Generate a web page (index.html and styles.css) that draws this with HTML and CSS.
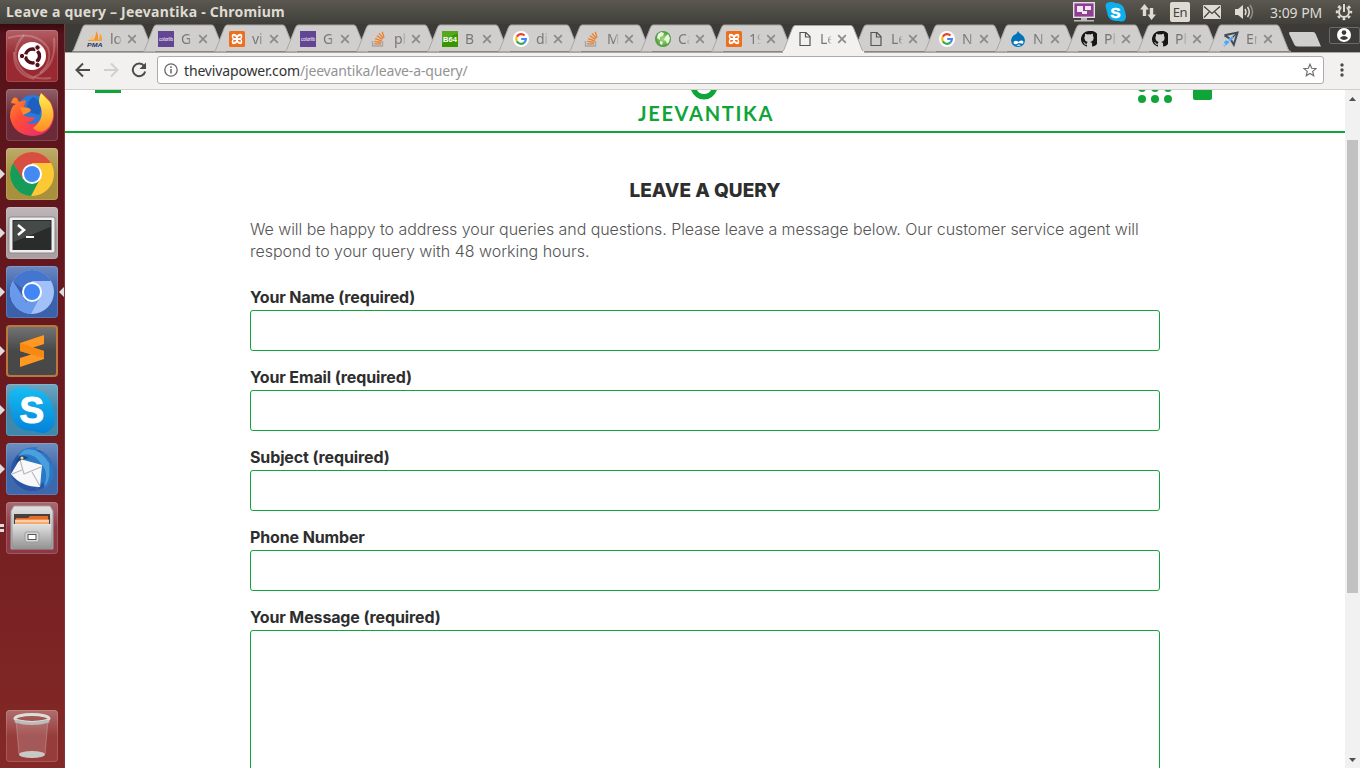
FILE: index.html
```
<!DOCTYPE html>
<html lang="en">
<head>
<meta charset="utf-8">
<title>Leave a query – Jeevantika</title>
<link rel="stylesheet" href="styles.css">
</head>
<body>
<svg class="defs" width="0" height="0">
  <defs>
    <linearGradient id="steel" x1="0" y1="0" x2="0" y2="1"><stop offset="0" stop-color="#e2e2e2"/><stop offset="1" stop-color="#929292"/></linearGradient>
    <linearGradient id="fire" x1="0" y1="0" x2="1" y2="1"><stop offset="0" stop-color="#ff9a25"/><stop offset=".4" stop-color="#ff4b38"/><stop offset="1" stop-color="#e5257b"/></linearGradient>
    <linearGradient id="flame" x1="0" y1="0" x2="0" y2="1"><stop offset="0" stop-color="#fff24e"/><stop offset="1" stop-color="#ff8c22"/></linearGradient>
    <linearGradient id="sky" x1="0" y1="0" x2="0" y2="1"><stop offset="0" stop-color="#18bdf3"/><stop offset="1" stop-color="#0482d8"/></linearGradient>
    <radialGradient id="leaf"><stop offset="0" stop-color="#a8dc7c"/><stop offset="1" stop-color="#47983b"/></radialGradient>
  </defs>
  <symbol id="shape" viewBox="0 0 84 28"><path d="M0 27.5C1 27.5 1.5 26 2 25L10.5 3.500Q11.500 1 13 1H69Q70.500 1 71.500 3.500L80 25Q81 27.500 83 27.500Z" fill="currentColor"/><path d="M.5 27.500L2 25L10.500 3.500Q11.500 1 13 1H69Q70.500 1 71.500 3.500L80 25Q81 27.500 83 27.500" fill="none" stroke="#aaa8a5" stroke-width="1"/></symbol>
  <symbol id="close" viewBox="0 0 10 10"><path d="M1.200 1.200L8.800 8.800M8.800 1.200L1.200 8.800" stroke="#8b8a88" stroke-width="1.700"/></symbol>
  <symbol id="xampp" viewBox="0 0 16 16"><rect width="16" height="16" rx="1.500" fill="#ec6f20"/><path d="M8 4.500Q6.800 2.800 4.800 2.800Q2.700 2.800 2.700 5Q2.700 6.800 3.800 8Q2.700 9.200 2.700 11Q2.700 13.200 4.800 13.200Q6.800 13.200 8 11.500Q9.200 13.200 11.200 13.200Q13.300 13.200 13.300 11Q13.300 9.200 12.200 8Q13.300 6.800 13.300 5Q13.300 2.800 11.200 2.800Q9.200 2.800 8 4.500Z" fill="#fff"/><path d="M5 4.700V6.300H7M11 4.700V6.300H9M5 11.300V9.700H7M11 11.300V9.700H9" fill="none" stroke="#ec6f20" stroke-width="1.200"/></symbol>
  <symbol id="so" viewBox="0 0 16 16"><path d="M1.500 10V15H11.500V10" fill="none" stroke="#a6a6a6" stroke-width="1.400"/><path d="M3.200 12.800H10M3.400 10.400L10.200 11.400M4.100 7.600L10.700 9.800M5.700 4.800L11.400 8.400M8 2.300L12.300 7.400M11.200.8L13.100 6.600" stroke="#ed7d26" stroke-width="1.300"/></symbol>
  <symbol id="google" viewBox="0 0 16 16"><circle cx="8" cy="8" r="8" fill="#fff"/><g fill="none" stroke-width="2.200"><path d="M11.500 4.500A4.900 4.900 0 0 0 3.800 5.700" stroke="#ea4335"/><path d="M3.800 5.700A4.900 4.900 0 0 0 3.800 10.300" stroke="#fbbc05"/><path d="M3.800 10.300A4.900 4.900 0 0 0 11.300 11.600" stroke="#34a853"/><path d="M11.300 11.600A4.900 4.900 0 0 0 12.900 8H8.200" stroke="#4285f4"/></g></symbol>
  <symbol id="globe" viewBox="0 0 16 16"><circle cx="8" cy="8" r="8" fill="url(#leaf)"/><path d="M3 3L6 1L9 2L8 5L5 6L5 9L2 7ZM10 6L13 3L15 7L14 11L12 13L11 10L9 9ZM5 10L8 11L7 14L5 13Z" fill="#e9f7dc"/></symbol>
  <symbol id="page" viewBox="0 0 16 16"><path d="M3 1.500H9L13 5.500V14.500H3ZM8.500 1.500V6H13" fill="none" stroke="#555" stroke-width="1.200"/></symbol>
  <symbol id="drupal" viewBox="0 0 16 16"><path d="M8 0Q9 2.500 12 4Q15 6 15 9.300Q14.500 16 8 16Q1.500 16 1 9.300Q1 6 4 4Q7 3 8 0Z" fill="#0073ba"/><path d="M4 10.500Q6 8.700 8.500 11Q11 8.700 13 10Q14 12 12.500 12.700Q10 12 8.500 12Q6 14 4 12.700Q3 11.600 4 10.500ZM6.500 14.200Q9 12.800 11 14.300Q9 15.300 6.500 14.200Z" fill="#fff"/></symbol>
  <symbol id="github" viewBox="0 0 16 16"><path fill="#171515" d="M8 0a8 8 0 0 0-2.530 15.590c.4.070.55-.17.550-.38v-1.490c-2.230.48-2.700-.95-2.700-.95-.36-.92-.89-1.170-.89-1.170-.73-.5.060-.49.060-.49.800.06 1.230.83 1.230.83.710 1.220 1.870.87 2.330.66.070-.52.280-.87.510-1.070l4-.0c.29.250.54.730.54 1.480v2.200c0 .21.150.46.550.38A8 8 0 0 0 8 0Z"/><path d="M4.200 2.800Q5.500 3 6.400 3.500Q8 3.100 9.600 3.500Q10.500 3 11.800 2.800Q12.200 3.800 11.900 4.800Q13 6 12.500 8Q12 10.600 9.200 11Q10 11.600 10 13V16H6V13Q6 11.600 6.800 11Q4 10.600 3.500 8Q3 6 4.100 4.800Q3.800 3.800 4.200 2.800Z" fill="#d0cfcd"/></symbol>
  <symbol id="plane" viewBox="0 0 16 16"><path d="M1.500 4.300L14.500 1.500L10.800 13.700L8.200 9.200M6.500 7.300L1.500 4.300" fill="none" stroke="#414b55" stroke-width="2"/><path d="M14 2L7 9" stroke="#414b55" stroke-width="1.200"/><path d="M10 6L1 15M4 9.800L1.500 12" stroke="#46aaff" stroke-width="2" stroke-dasharray="5 1"/></symbol>
</svg>

<header class="menubar">
  <span class="window-title">Leave a query – Jeevantika - Chromium</span>
  <div class="tray">
    <svg class="t-display" viewBox="0 0 22 20"><rect x=".7" y=".7" width="20.600" height="14.600" fill="#8f3f91" stroke="#e5dfe5" stroke-width="1.400"/><path d="M4 4H10V10H4ZM12 4H18V8H12ZM9 9H14V12H9Z" fill="#f3e7f3"/><path d="M8 16H14V18H21V19.500H1V18H8Z" fill="#bcbab6"/></svg>
    <svg class="t-skype" viewBox="0 0 22 22"><path d="M1 7Q-1 1 6 1Q9 1 10 2Q19 2 20 11Q21 13 21 16Q20 22 14 20Q3 21 2 11Z" fill="#0eaff0"/><text x="5.500" y="16.500" font-family="Liberation Sans" font-size="15" font-weight="700" fill="#fff" stroke="#fff" stroke-width=".6">S</text></svg>
    <svg class="t-arrows" viewBox="0 0 18 18"><path d="M5.500 1L10 6.500H7.200V13H3.800V6.500H1ZM12.500 17L8.500 11.500H10.800V5H14.200V11.500H17Z" fill="#dfdbd2"/></svg>
    <span class="lang">En</span>
    <svg class="t-mail" viewBox="0 0 18 14"><rect width="18" height="14" rx="1" fill="#dfdbd2"/><path d="M1 1.500L9 8.500L17 1.500M1 12.500L6.200 7M17 12.500L11.800 7" fill="none" stroke="#45443e" stroke-width="1.300"/></svg>
    <svg class="t-sound" viewBox="0 0 22 18"><path d="M1 6H4L9 2V16L4 12H1Z" fill="#dfdbd2"/><g fill="none" stroke="#dfdbd2" stroke-width="1.500"><path d="M11 6Q13 9 11 12M13.500 4Q17 9 13.500 14"/><path d="M16 2Q21 9 16 16" opacity=".45"/></g></svg>
    <span class="clock">3:09 PM</span>
    <svg class="t-gear" viewBox="0 0 18 18"><circle cx="9" cy="9" r="7" fill="none" stroke="#dfdbd2" stroke-width="2.400" stroke-dasharray="2.750 2.750" stroke-dashoffset="1.400"/><circle cx="9" cy="9" r="5" fill="none" stroke="#dfdbd2" stroke-width="2"/><path d="M9 0V8.500" stroke="#4b4a44" stroke-width="5"/><path d="M9 1V9" stroke="#dfdbd2" stroke-width="2"/></svg>
  </div>
</header>

<div class="desktop">
  <nav class="launcher">
    <div class="tile dash"><svg viewBox="0 0 52 52"><g fill="none" stroke="#fff" stroke-opacity=".22" stroke-width="2"><path d="M2 8Q30 0 42 18Q47 32 34 43"/><path d="M48 8Q51 38 28 47"/><path d="M18 5Q4 21 13 36Q22 51 45 48"/><path d="M8 22Q7 44 28 49"/></g><circle cx="26" cy="26" r="14" fill="#fff"/><circle cx="26.500" cy="26" r="7" fill="none" stroke="#531019" stroke-width="3.400" stroke-dasharray="12.700 2" stroke-dashoffset="6"/><g fill="#531019" stroke="#fff"><circle cx="16" cy="26" r="2.700"/><circle cx="31.500" cy="17.500" r="2.700"/><circle cx="31.500" cy="35" r="2.700"/></g></svg></div>
    <div class="tile firefox"><svg viewBox="0 0 52 52"><circle cx="27" cy="23" r="17" fill="#2879d9"/><path d="M27 8Q18 15 23 23L33 26Q40 14 27 8Z" fill="#174fae" opacity=".6"/><path d="M5 14Q7 7 11 9L13 13Q20 10 20 12L18 18L25 20Q23 25 16 25Q21 29 29 28Q27 34 20 33Q29 39 38 27Q41 17 34 11L37 5Q49 15 48 28Q45 46 27 47Q7 46 4 28Q4 17 10 15Z" fill="url(#fire)"/><path d="M35 4Q31 12 35 19Q38 31 27 39Q35 47 43 38Q51 27 44 13L39 8Z" fill="url(#flame)"/><path d="M14 18L23 19L25 22L17 26Z" fill="#ff8d29"/></svg></div>
    <div class="tile chrome running"><svg viewBox="0 0 52 52"><circle cx="26" cy="26" r="22" fill="#fcc934"/><path d="M7 15A22 22 0 0 1 45 15H26L16 31Z" fill="#d94e42"/><path d="M7 15A22 22 0 0 0 25 48L34 31H17Z" fill="#169b59"/><circle cx="26" cy="26" r="10" fill="#fff"/><circle cx="26" cy="26" r="8" fill="#448af3"/></svg></div>
    <div class="tile terminal running"><svg viewBox="0 0 52 52"><rect x="3" y="10" width="46" height="36" rx="2" fill="#eee" stroke="#888"/><rect x="6.500" y="13" width="39" height="30" fill="#292c2b"/><path d="M7.500 14H44.500V20L7.500 35Z" fill="#454948"/><path d="M12 18L18 23L12 28" fill="none" stroke="#fff" stroke-width="2.500"/><path d="M20 30H28" stroke="#fff" stroke-width="2"/></svg></div>
    <div class="tile chromium running focused"><svg viewBox="0 0 52 52"><circle cx="26" cy="26" r="22" fill="#a2c1f8"/><path d="M7 15A22 22 0 0 1 45 15H26L16 31Z" fill="#4476cf"/><path d="M7 15A22 22 0 0 0 25 48L34 31H17Z" fill="#6999eb"/><path d="M7 15L21 37L17 23Z" fill="#3a5fae"/><circle cx="26" cy="26" r="10" fill="#fff"/><circle cx="26" cy="26" r="8" fill="#4285f4"/></svg></div>
    <div class="tile sublime running"><svg viewBox="0 0 52 52"><path d="M14 18L38 10V19L27 22.500L38 26V34L14 42V33L25 29.500L14 26Z" fill="#ff9822"/><path d="M14 18L38 26V33L14 26Z" fill="#f58912"/></svg></div>
    <div class="tile skype running"><svg viewBox="0 0 52 52"><path d="M3 17Q2 3 15 3Q21 3 25 5Q43 6 47 24Q53 44 39 49Q32 49 28 47Q7 48 5 27Z" fill="url(#sky)"/><text x="13.500" y="39" font-family="Liberation Sans" font-weight="700" font-size="37" fill="#fff" stroke="#fff" stroke-width="1">S</text></svg></div>
    <div class="tile thunderbird running"><svg viewBox="0 0 52 52"><circle cx="26" cy="27" r="21" fill="#2c54a6"/><path d="M12 15Q13 4 31 4Q28 8 38 10Q51 22 46 37L40 46L37 39L30 47L35 30Z" fill="#2b79c6"/><path d="M12 13Q27 7 36 22Q43 29 38 44Q45 38 43 20Q32 3 18 7Z" fill="#4a9fdc"/><path d="M5 31L14 16L36 22L34 44Q15 44 5 31Z" fill="#f8f8f8"/><path d="M14 17L18 31L35 24M6 31L16 27M34 43L26 29" fill="none" stroke="#b4b7be" stroke-width="1.100"/><path d="M10 20Q12 8 23 15L15 17Z" fill="#174a83"/><circle cx="16" cy="15" r="1.500" fill="#ffd36a"/></svg></div>
    <div class="tile files running twin"><svg viewBox="0 0 52 52"><path d="M8 4H44L47 9V47H5V9Z" fill="url(#steel)" stroke="#a3a3a3"/><rect x="8" y="12" width="36" height="20" fill="#49403d"/><path d="M10 16H22L24 14H42V30H10Z" fill="#e66b2e"/><path d="M9 17.500H43V23H9Z" fill="#f5ab6d"/><path d="M9 19H43" stroke="#fff3df"/><path d="M7 22H45V47H7Z" fill="url(#steel)"/><rect x="19" y="30" width="14" height="10" rx="2" fill="#d8d8d8" stroke="#999"/><rect x="22" y="32.500" width="8" height="5" fill="#fff" stroke="#555"/></svg></div>
    <div class="tile trash"><svg viewBox="0 0 52 52"><path d="M10 10L13 44Q26 49 39 44L42 10Z" fill="#fff" fill-opacity=".14" stroke="#d9b4b2" stroke-opacity=".4"/><ellipse cx="26" cy="44.500" rx="13" ry="3.500" fill="#c8c8c5"/><ellipse cx="26" cy="8.500" rx="17" ry="4" fill="#a35454" stroke="#deded9" stroke-width="3"/><path d="M9 11Q26 16 43 11" fill="none" stroke="#bbb" stroke-width="3"/></svg></div>
  </nav>

  <main class="browser">
    <div class="tabstrip">
      <div class="tab"><svg class="shape"><use href="#shape"/></svg><svg class="fav" viewBox="0 0 16 16"><path d="M3 9L6 2V9Z" fill="#ffc158"/><path d="M6.500 9Q9 6 9 0Q12 4 11 9Z" fill="#f79328"/><path d="M12 9Q13.500 5 12.500 2.500Q15.500 5 15 9ZM1 9L15 8.400V10L1 10Z" fill="#f4a13c"/><text x="0" y="15.500" font-family="Liberation Sans" font-weight="bold" font-style="italic" font-size="6" textLength="15.500" lengthAdjust="spacingAndGlyphs" fill="#263566">PMA</text></svg><span>lo</span><svg class="x"><use href="#close"/></svg></div>
      <div class="tab"><svg class="shape"><use href="#shape"/></svg><svg class="fav" viewBox="0 0 16 16"><rect width="16" height="16" fill="#624693"/><text x="1" y="9.700" font-family="Liberation Sans" font-size="5" textLength="14" lengthAdjust="spacingAndGlyphs" fill="#fff">colorlib</text></svg><span>G</span><svg class="x"><use href="#close"/></svg></div>
      <div class="tab"><svg class="shape"><use href="#shape"/></svg><svg class="fav"><use href="#xampp"/></svg><span>vi</span><svg class="x"><use href="#close"/></svg></div>
      <div class="tab"><svg class="shape"><use href="#shape"/></svg><svg class="fav" viewBox="0 0 16 16"><rect width="16" height="16" fill="#624693"/><text x="1" y="9.700" font-family="Liberation Sans" font-size="5" textLength="14" lengthAdjust="spacingAndGlyphs" fill="#fff">colorlib</text></svg><span>G</span><svg class="x"><use href="#close"/></svg></div>
      <div class="tab"><svg class="shape"><use href="#shape"/></svg><svg class="fav"><use href="#so"/></svg><span>ph</span><svg class="x"><use href="#close"/></svg></div>
      <div class="tab"><svg class="shape"><use href="#shape"/></svg><svg class="fav" viewBox="0 0 16 16"><rect width="16" height="16" fill="#389600"/><path d="M0 0H16V2Q8 5 0 13Z" fill="#54a91e"/><text x="1" y="10.500" font-family="Liberation Sans" font-size="7" font-weight="bold" textLength="14" lengthAdjust="spacingAndGlyphs" fill="#fff">B64</text></svg><span>B</span><svg class="x"><use href="#close"/></svg></div>
      <div class="tab"><svg class="shape"><use href="#shape"/></svg><svg class="fav"><use href="#google"/></svg><span>di</span><svg class="x"><use href="#close"/></svg></div>
      <div class="tab"><svg class="shape"><use href="#shape"/></svg><svg class="fav"><use href="#so"/></svg><span>M</span><svg class="x"><use href="#close"/></svg></div>
      <div class="tab"><svg class="shape"><use href="#shape"/></svg><svg class="fav"><use href="#globe"/></svg><span>Ca</span><svg class="x"><use href="#close"/></svg></div>
      <div class="tab"><svg class="shape"><use href="#shape"/></svg><svg class="fav"><use href="#xampp"/></svg><span>19</span><svg class="x"><use href="#close"/></svg></div>
      <div class="tab active"><svg class="shape"><use href="#shape"/></svg><svg class="fav"><use href="#page"/></svg><span>Le</span><svg class="x"><use href="#close"/></svg></div>
      <div class="tab"><svg class="shape"><use href="#shape"/></svg><svg class="fav"><use href="#page"/></svg><span>Le</span><svg class="x"><use href="#close"/></svg></div>
      <div class="tab"><svg class="shape"><use href="#shape"/></svg><svg class="fav"><use href="#google"/></svg><span>N</span><svg class="x"><use href="#close"/></svg></div>
      <div class="tab"><svg class="shape"><use href="#shape"/></svg><svg class="fav"><use href="#drupal"/></svg><span>N</span><svg class="x"><use href="#close"/></svg></div>
      <div class="tab"><svg class="shape"><use href="#shape"/></svg><svg class="fav"><use href="#github"/></svg><span>Ph</span><svg class="x"><use href="#close"/></svg></div>
      <div class="tab"><svg class="shape"><use href="#shape"/></svg><svg class="fav"><use href="#github"/></svg><span>Ph</span><svg class="x"><use href="#close"/></svg></div>
      <div class="tab"><svg class="shape"><use href="#shape"/></svg><svg class="fav"><use href="#plane"/></svg><span>En</span><svg class="x"><use href="#close"/></svg></div>
      <svg class="newtab" viewBox="0 0 34 16"><path d="M1.500 0H25Q27 0 27.700 2L33 14.500H9.500Q7 14.500 6 12L1 1.500Z" fill="#d0cfcd"/></svg>
      <div class="account"><svg viewBox="0 0 14 14"><circle cx="7" cy="7" r="7" fill="#fff"/><circle cx="7" cy="4.600" r="2.300" fill="#3c3b37"/><path d="M2.800 10Q7 6 11.200 10Q7 14 2.800 10Z" fill="#3c3b37"/></svg></div>
    </div>

    <div class="toolbar">
      <svg class="nav" viewBox="0 0 16 16"><path d="M15 8H2M8 1.500L1.500 8L8 14.500" fill="none" stroke="#4b4b4b" stroke-width="2"/></svg>
      <svg class="nav" viewBox="0 0 16 16"><path d="M1 8H14M8 1.500L14.500 8L8 14.500" fill="none" stroke="#d0d0cf" stroke-width="2"/></svg>
      <svg class="nav" viewBox="0 0 16 16"><path d="M13.200 4.200A6.300 6.300 0 1 0 14.200 9.500" fill="none" stroke="#4b4b4b" stroke-width="2"/><path d="M15 .5V7H8.500Z" fill="#4b4b4b"/></svg>
      <div class="omnibox">
        <svg class="info" viewBox="0 0 14 14"><circle cx="7" cy="7" r="6.200" fill="none" stroke="#666" stroke-width="1.300"/><path d="M7 6V10.500M7 3.300V4.900" stroke="#666" stroke-width="1.500"/></svg>
        <span class="url">thevivapower.com<i>/jeevantika/leave-a-query/</i></span>
        <svg class="star" viewBox="0 0 14 14"><path d="M7 1.300L8.700 5.300L13 5.600L9.700 8.400L10.700 12.700L7 10.400L3.300 12.700L4.300 8.400L1 5.600L5.300 5.300Z" fill="none" stroke="#6e6e6e" stroke-width="1.200"/></svg>
      </div>
      <svg class="dots" viewBox="0 0 4 14"><g fill="#4b4b4b"><circle cx="2" cy="2" r="1.700"/><circle cx="2" cy="7" r="1.700"/><circle cx="2" cy="12" r="1.700"/></g></svg>
    </div>

    <div class="viewport">
      <div class="page">
        <div class="site-header">
          <span class="burger"></span>
          <div class="brand"><svg viewBox="0 0 28 10"><path d="M0 0Q4 9.500 13 9.500Q22 9.500 26 0H20Q18 4 13 4Q8 4 6 0Z" fill="#0fa539"/></svg><span>JEEVANTIKA</span></div>
          <svg class="apps" viewBox="0 0 34 14"><g fill="#0fa539"><circle cx="4" cy="-2" r="4"/><circle cx="17" cy="-2" r="4"/><circle cx="30" cy="-2" r="4"/><circle cx="4" cy="9" r="4"/><circle cx="17" cy="9" r="4"/><circle cx="30" cy="9" r="4"/></g></svg>
          <span class="bag"></span>
        </div>
        <form class="query">
          <h1>LEAVE A QUERY</h1>
          <p><span class="line1">We will be happy to address your queries and questions. Please leave a message below. Our customer service agent will</span><br><span class="line2">respond to your query with 48 working hours.</span></p>
          <label><span>Your Name (required)</span><input type="text"></label>
          <label><span>Your Email (required)</span><input type="text"></label>
          <label><span>Subject (required)</span><input type="text"></label>
          <label><span>Phone Number</span><input type="text"></label>
          <label><span>Your Message (required)</span><textarea></textarea></label>
        </form>
      </div>
      <div class="scrollbar">
        <svg viewBox="0 0 7 4"><path d="M0 4L3.500 0L7 4Z" fill="#505050"/></svg>
        <div class="thumb"></div>
        <svg viewBox="0 0 7 4"><path d="M0 0L3.500 4L7 0Z" fill="#505050"/></svg>
      </div>
    </div>
  </main>
</div>
</body>
</html>
```
FILE: styles.css
```
* { box-sizing: border-box; }
html, body { height: 100%; }
body { margin: 0; overflow: hidden; background: #fff; font-family: "Noto Sans", sans-serif; display: flex; flex-direction: column; }
svg { display: block; flex: none; }
.defs { position: absolute; }

.menubar { flex: none; height: 24px; display: flex; justify-content: space-between; align-items: center; padding: 0 7px 0 6px; background: linear-gradient(#5a5850, #403f3a); color: #dfdbd2; }
.window-title { font-size: 14px; font-weight: 700; line-height: 24px; white-space: nowrap; letter-spacing: .23px; }
.tray { display: flex; align-items: center; height: 24px; }
.t-display { width: 22px; height: 20px; }
.t-skype { width: 22px; height: 22px; margin-left: 10px; }
.t-arrows { width: 18px; height: 18px; margin-left: 12px; }
.lang { width: 20px; height: 20px; margin-left: 13px; border-radius: 2px; background: #dfdbd2; color: #45443e; font-size: 13px; line-height: 20px; text-align: center; letter-spacing: -.5px; }
.t-mail { width: 18px; height: 14px; margin-left: 13px; }
.t-sound { width: 22px; height: 18px; margin-left: 13px; }
.clock { width: 52px; margin-left: 14px; font-size: 14px; letter-spacing: -.05px; white-space: nowrap; }
.t-gear { width: 18px; height: 18px; margin-left: 13px; }

.desktop { flex: 1; min-height: 0; display: flex; }
.launcher { flex: none; width: 65px; padding: 6px 6px 6px; display: flex; flex-direction: column; gap: 7px; background: linear-gradient(#380b0f 0, #54121a 10px, #5c151b 100px, #6c1a1f 50%, #842927 100%); border-right: 1px solid #813537; }
.tile { position: relative; flex: none; width: 52px; height: 52px; border-radius: 4px; background: #9b4a4c; }
.tile svg { width: 52px; height: 52px; border-radius: 4px; background: linear-gradient(rgba(255,255,255,.25), rgba(255,255,255,0) 50%); box-shadow: inset 0 0 0 1px rgba(255,255,255,.15); }
.dash { background: #992a31; }
.firefox { background: #6b2a37; }
.chrome { background: #a9903c; }
.terminal { background: #a99fa1; }
.chromium { background: #3b61ab; }
.sublime { background: #484848; }
.sublime svg { box-shadow: inset 0 0 0 2px #b9793d; }
.skype { background: #4088ab; }
.thunderbird { background: #3d69ac; }
.files { background: #8d3945; }
.trash { margin-top: auto; background: #963d3c; }
.running::before { content: ""; position: absolute; left: -6px; top: 21px; border: 5px solid transparent; border-left-color: #ddd; border-right: 0; }
.focused::after { content: ""; position: absolute; right: -6px; top: 21px; border: 5px solid transparent; border-right-color: #ddd; border-left: 0; }
.twin::before { top: 22px; width: 4px; height: 2px; border: solid #ddd; border-width: 3px 0; }

.browser { flex: 1; min-width: 0; display: flex; flex-direction: column; }
.tabstrip { flex: none; height: 29px; padding-left: 7px; display: flex; background: #3c3b37; border-bottom: 1px solid #aaa8a5; }
.tab { position: relative; z-index: 1; flex: none; width: 71px; height: 29px; display: flex; align-items: center; padding-left: 15px; color: #d0cfcd; }
.shape { position: absolute; left: 0; top: 0; width: 84px; height: 28px; }
.fav { position: relative; width: 16px; height: 16px; margin-top: 1px; }
.tab span { position: relative; width: 12px; margin-left: 7px; overflow: hidden; white-space: nowrap; font-size: 14px; line-height: 20px; color: #777; -webkit-mask-image: linear-gradient(90deg, #000 60%, transparent); mask-image: linear-gradient(90deg, #000 60%, transparent); }
.x { position: relative; width: 10px; height: 10px; margin: 1px 0 0 5px; }
.active { z-index: 2; color: #f2f1ef; }
.active .shape { height: 29px; }
.active::after { content: ""; position: absolute; left: 1px; top: 27px; width: 81px; height: 2px; background: #f2f1ef; }
.newtab { position: relative; z-index: 2; width: 34px; height: 16px; margin: 8px 0 0 9px; }
.account { width: 31px; height: 17px; margin: 3px 0 0 auto; padding: 0 0 0 7px; border: 1px solid #6b6a66; border-radius: 2px; }
.account svg { width: 14px; height: 14px; }

.toolbar { flex: none; height: 37px; display: flex; align-items: center; padding: 0 16px 2px 10px; background: #f2f1ef; border-bottom: 1px solid #cfcecc; }
.nav { width: 16px; height: 16px; margin-right: 12px; }
.omnibox { flex: 1; height: 28px; display: flex; align-items: center; margin: 0 16px 0 -2px; padding: 0 6px; border: 1px solid #aeacaa; border-radius: 3px; background: #fff; }
.info { width: 14px; height: 14px; }
.url { flex: 1; margin-left: 6px; font-size: 14px; letter-spacing: -.15px; color: #333; white-space: nowrap; }
.url i { font-style: normal; color: #939393; }
.star { width: 14px; height: 14px; }
.dots { width: 4px; height: 14px; }

.viewport { flex: 1; min-height: 0; display: flex; }
.page { flex: 1; overflow: hidden; background: #fff; }
.site-header { height: 43px; display: flex; align-items: flex-start; padding-left: 30px; border-bottom: 2px solid #0fa539; }
.burger { width: 26px; height: 3px; background: #0fa539; }
.brand { display: flex; flex-direction: column; align-items: center; width: 134px; margin-left: 517px; color: #0fa539; font: 700 20px/20px Lato, sans-serif; white-space: nowrap; letter-spacing: 1.7px; }
.brand svg { width: 28px; height: 10px; }
.brand span { margin: 3px -2px 0 0; }
.apps { width: 34px; height: 14px; margin-left: 366px; }
.bag { width: 19px; height: 10px; margin-left: 21px; border-radius: 0 0 2px 2px; background: #0fa539; }

.query { width: 910px; margin: 0 auto; padding-top: 45px; font-family: Inter, sans-serif; color: #2e2e2e; }
.query h1 { margin: 0; font-size: 19px; line-height: 26px; font-weight: 800; text-align: center; letter-spacing: 0; }
.query p { margin: 14px 0 24px; font-size: 16px; line-height: 22px; font-weight: 300; color: #555; white-space: nowrap; }
.line1 { letter-spacing: -.067px; }
.line2 { letter-spacing: -.02px; }
.query label { display: block; height: 80px; font-size: 16px; line-height: 22px; font-weight: 700; white-space: nowrap; letter-spacing: -.13px; }
.query label span { display: block; width: max-content; height: 24px; }
.query input, .query textarea { display: block; width: 910px; height: 41px; margin: 0; padding: 8px; border: 1px solid #0fa539; border-radius: 3px; background: #fff; outline: 0; resize: none; }
.query textarea { height: 200px; }

.scrollbar { flex: none; width: 15px; display: flex; flex-direction: column; align-items: center; padding: 7px 0 6px; background: #f1f1f1; }
.scrollbar svg { width: 7px; height: 4px; }
.thumb { width: 11px; height: 453px; margin: 39px 0 auto; background: #c1c1c1; }
```
